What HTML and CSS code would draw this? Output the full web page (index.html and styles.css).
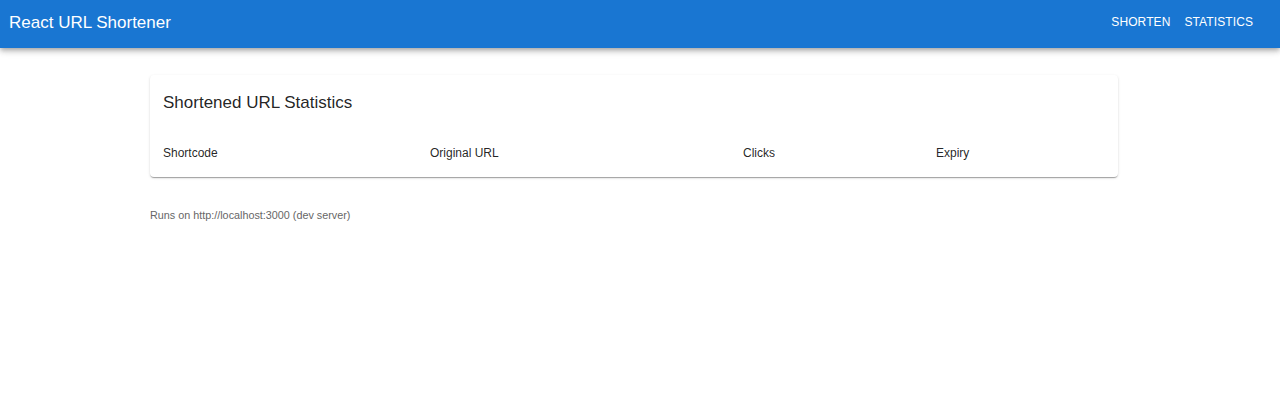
FILE: index.html
```html
<!DOCTYPE html>
<html lang="en">
<head>
<meta charset="utf-8">
<title>React URL Shortener</title>
<link rel="stylesheet" href="styles.css">
</head>
<body>
<header class="appbar">
  <div class="brand">React URL Shortener</div>
  <nav class="nav">
    <a class="nav-btn">SHORTEN</a>
    <a class="nav-btn">STATISTICS</a>
  </nav>
</header>
<main class="container">
  <section class="card">
    <h2 class="card-title">Shortened URL Statistics</h2>
    <div class="table-head">
      <div>Shortcode</div>
      <div>Original URL</div>
      <div>Clicks</div>
      <div>Expiry</div>
    </div>
  </section>
  <p class="note">Runs on http://localhost:3000 (dev server)</p>
</main>
</body>
</html>
```

FILE: styles.css
```css
* { box-sizing: border-box; }
html, body { margin: 0; padding: 0; background: #fff; }
body {
  font-family: "Liberation Sans", Arial, sans-serif;
  color: rgba(0,0,0,0.87);
}
.appbar {
  height: 48px;
  background: #1976d2;
  color: #fff;
  display: flex;
  align-items: center;
  justify-content: space-between;
  padding: 0 27px 0 9px;
  box-shadow: 0 2px 4px -1px rgba(0,0,0,0.2), 0 4px 5px 0 rgba(0,0,0,0.14), 0 1px 10px 0 rgba(0,0,0,0.12);
}
.brand {
  font-size: 17px;
  line-height: 1;
  margin-top: -4px;
}
.nav {
  display: flex;
  gap: 14px;
  margin-top: -5px;
}
.nav-btn {
  font-size: 12px;
  line-height: 1;
  color: #fff;
  text-decoration: none;
  letter-spacing: 0.1px;
}
.container {
  width: 968px;
  margin: 27px 0 0 150px;
}
.card {
  background: #fff;
  border-radius: 4px;
  padding: 0 13px;
  height: 102px;
  box-shadow: 0 2px 1px -1px rgba(0,0,0,0.2), 0 1px 1px 0 rgba(0,0,0,0.14), 0 1px 3px 0 rgba(0,0,0,0.12);
}
.card-title {
  margin: 0;
  padding-top: 19px;
  font-size: 17px;
  font-weight: 400;
  line-height: 17px;
  color: rgba(0,0,0,0.87);
}
.table-head {
  display: grid;
  grid-template-columns: 267px 313px 193px 1fr;
  margin-top: 35px;
  font-size: 12px;
  line-height: 14px;
  color: rgba(0,0,0,0.87);
}
.note {
  margin: 32px 0 0;
  font-size: 10.8px;
  line-height: 12px;
  color: #666;
}
```
